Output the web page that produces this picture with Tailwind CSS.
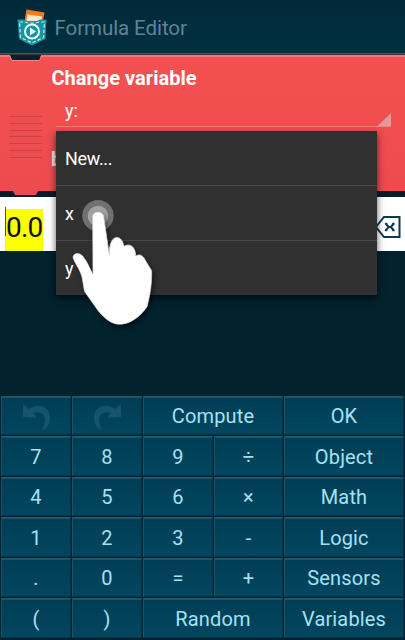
<!DOCTYPE html>
<html lang="en">
<head>
<meta charset="utf-8">
<title>Formula Editor</title>
<script src="https://cdn.jsdelivr.net/npm/@tailwindcss/browser@4"></script>
</head>
<body class="w-[405px] h-[640px] overflow-hidden bg-[#02222d] font-[Roboto,sans-serif]">
<div class="relative flex h-[640px] w-[405px] flex-col overflow-hidden">
  <header class="flex h-[53px] shrink-0 items-center bg-linear-to-b from-[#012936] to-[#013043] pl-4">
    <svg class="h-[40px] w-8 shrink-0" viewBox="0 0 32 40">
      <path d="M10.500 2.500L28.500 5.500 26 19 8 17Z" fill="#f17c1d"/>
      <path d="M11.500 7.500L26 9.500 25 17 10 17Z" fill="#fbe5c9"/>
      <path d="M1.500 12.500H8L11 14H21L24 12.500H30.500L29.500 32 16 38.500 3 32Z" fill="#12969f"/>
      <path d="M3.500 15H9L12 16H20L23 15H28.500L27.500 30.500 16 36 4.500 30.500Z" fill="none" stroke="#b9edef" stroke-width="1.200" stroke-dasharray="3.500 2"/>
      <circle cx="16" cy="24.500" r="7" fill="#12969f" stroke="#f2ffff" stroke-width="2"/>
      <path d="M14 20.500L20 24.500 14 28.500Z" fill="#e6ffff"/>
    </svg>
    <h1 class="ml-[6.500px] mt-[3px] text-[20.500px] leading-6 tracking-[-0.08px] text-[#5f8497]">Formula Editor</h1>
  </header>

  <section class="relative flex h-[138px] shrink-0 flex-col border-t border-[#793b48] bg-linear-to-b from-[#f45050] to-[#ed4b4f]">
    <div class="h-px bg-[#49323f]"></div>
    <div class="h-[2px] bg-[#e87880]"></div>
    <svg class="absolute left-0 top-0 h-[139px] w-[56px]" viewBox="0 0 56 139">
      <path d="M10 1H41L39.500 6.500H12Z" fill="#07202c"/>
      <path d="M9.500 2L12 6.500H39.500L41.500 2" fill="none" stroke="#ef8588"/>
      <g stroke="#c6434a"><path d="M9.500 62.500H42M9.500 69.500H42M9.500 76.500H42M9.500 82.500H42M9.500 89.500H42M9.500 96.500H42M9.500 103.500H42"/></g>
    </svg>
    <h2 class="ml-[51.500px] mt-[8.500px] text-[20px] font-bold leading-6 tracking-[0.03px] text-white">Change variable</h2>
    <div class="ml-14 mr-[14px] mt-[7.500px] flex h-[30px] items-start justify-between border-b border-[#f47c7b] pl-[9px]">
      <span class="mt-[3px] text-[18px] leading-[22px] text-white">y:</span>
      <svg class="mt-[16px] h-[13px] w-[14px]" viewBox="0 0 14 13"><path d="M0.500 13L14 0V13Z" fill="#e49899"/></svg>
    </div>
    <span class="ml-[51px] mt-[20px] text-[20px] font-bold leading-6 text-[#fbe6e6]">b</span>
  </section>

  <div class="relative h-[6px] shrink-0 bg-[#071d29]">
    <svg class="absolute left-[13px] top-0 h-[5px] w-[25px]" viewBox="0 0 25 5"><path d="M0 0H25L23 4H2Z" fill="#ed4b4f"/></svg>
  </div>
  <div class="flex h-[54px] shrink-0 items-center justify-between bg-white pl-[5px] pr-1">
    <div class="flex h-[42px] w-[38px] items-start self-end bg-[#fbff00] pl-px">
      <span class="mt-[1px] text-[28px] leading-9 tracking-[-0.8px] text-[#111]">0.0</span>
    </div>
    <svg class="mt-[5px] h-[24px] w-[27px]" viewBox="0 0 27 24" fill="none" stroke="#073a50">
      <path d="M10 2H25.500V22H10L2 12Z" stroke-width="2"/>
      <path d="M11.500 8.500L14.800 12 11.500 15.500M20 8.500L16.700 12 20 15.500M14 12H17.500" stroke-width="2"/>
      <path d="M10.800 8.300H13.500M18 8.300H20.700M10.800 15.700H13.500M18 15.700H20.700" stroke-width="1"/>
    </svg>
    <div class="absolute left-[5px] top-[207px] h-[29px] w-px bg-[#555b0b]"></div>
  </div>
  <div class="h-[145px] shrink-0"></div>

  <main class="grid h-[244px] shrink-0 grid-cols-[70px_70px_70px_69px_120px] grid-rows-[39px_40px_39px_40px_39px_40px] gap-px bg-[#01222e] pl-px text-center text-[20px] leading-none tracking-[0.15px] text-[#a5e1f5] *:flex *:items-center *:justify-center *:border-t-2 *:border-l *:border-r *:border-b *:border-t-[#1d5669] *:border-l-[#1b5265] *:border-r-[#023447] *:border-b-[#023447] *:bg-linear-to-b *:from-[#013e55] *:to-[#02465f]">
    <button aria-label="Undo"><svg class="h-[27px] w-[29px]" viewBox="0 0 29 27"><path d="M1 1L7 6C17-1 28 4 28 15C28 20 26 24 22 27L20.500 26C27 15 21 7 11 10L15 15L1 14Z" fill="#15546b"/></svg></button>
    <button aria-label="Redo"><svg class="h-[27px] w-[29px] -scale-x-100" viewBox="0 0 29 27"><path d="M1 1L7 6C17-1 28 4 28 15C28 20 26 24 22 27L20.500 26C27 15 21 7 11 10L15 15L1 14Z" fill="#15546b"/></svg></button>
    <button class="col-span-2">Compute</button><button>OK</button>
    <button>7</button><button>8</button><button>9</button><button>÷</button><button>Object</button>
    <button>4</button><button>5</button><button>6</button><button>×</button><button>Math</button>
    <button>1</button><button>2</button><button>3</button><button>-</button><button>Logic</button>
    <button>.</button><button>0</button><button>=</button><button>+</button><button>Sensors</button>
    <button>(</button><button>)</button><button class="col-span-2">Random</button><button>Variables</button>
  </main>

  <div class="absolute left-[56px] top-[131px] flex h-[164px] w-[321px] flex-col bg-[#303030] text-[18px] tracking-[-0.3px] text-white shadow-[0_3px_7px_rgba(0,0,0,0.65)] *:flex *:items-center *:pl-[9px]">
    <div class="h-[55px] border-b border-[#484848]">New...</div>
    <div class="h-[55px] border-b border-[#484848]">x</div>
    <div class="h-[54px]">y</div>
  </div>

  <svg class="absolute left-[50px] top-[190px] h-[150px] w-[120px]" viewBox="0 0 360 450">
    <circle cx="144" cy="77" r="47" fill="#707070"/>
    <circle cx="144" cy="78" r="31" fill="#a3a3a3"/>
    <path class="drop-shadow-[6px_9px_8px_rgba(0,0,0,0.5)]" d="M128 80C128 62 160 62 161 80L178 195C176 128 216 131 222 169C241 158 257 172 257 198C270 189 282 200 286 211L305 242C306 285 299 320 291 350C270 382 238 403 208 403C181 402 162 382 145 363L104 305C98 280 99 262 90 245C84 231 73 217 69 202C72 184 94 190 101 202C113 216 119 237 129 253Z" fill="#fff" stroke="#ddd" stroke-width="2" stroke-linejoin="round"/>
  </svg>
</div>
</body>
</html>
